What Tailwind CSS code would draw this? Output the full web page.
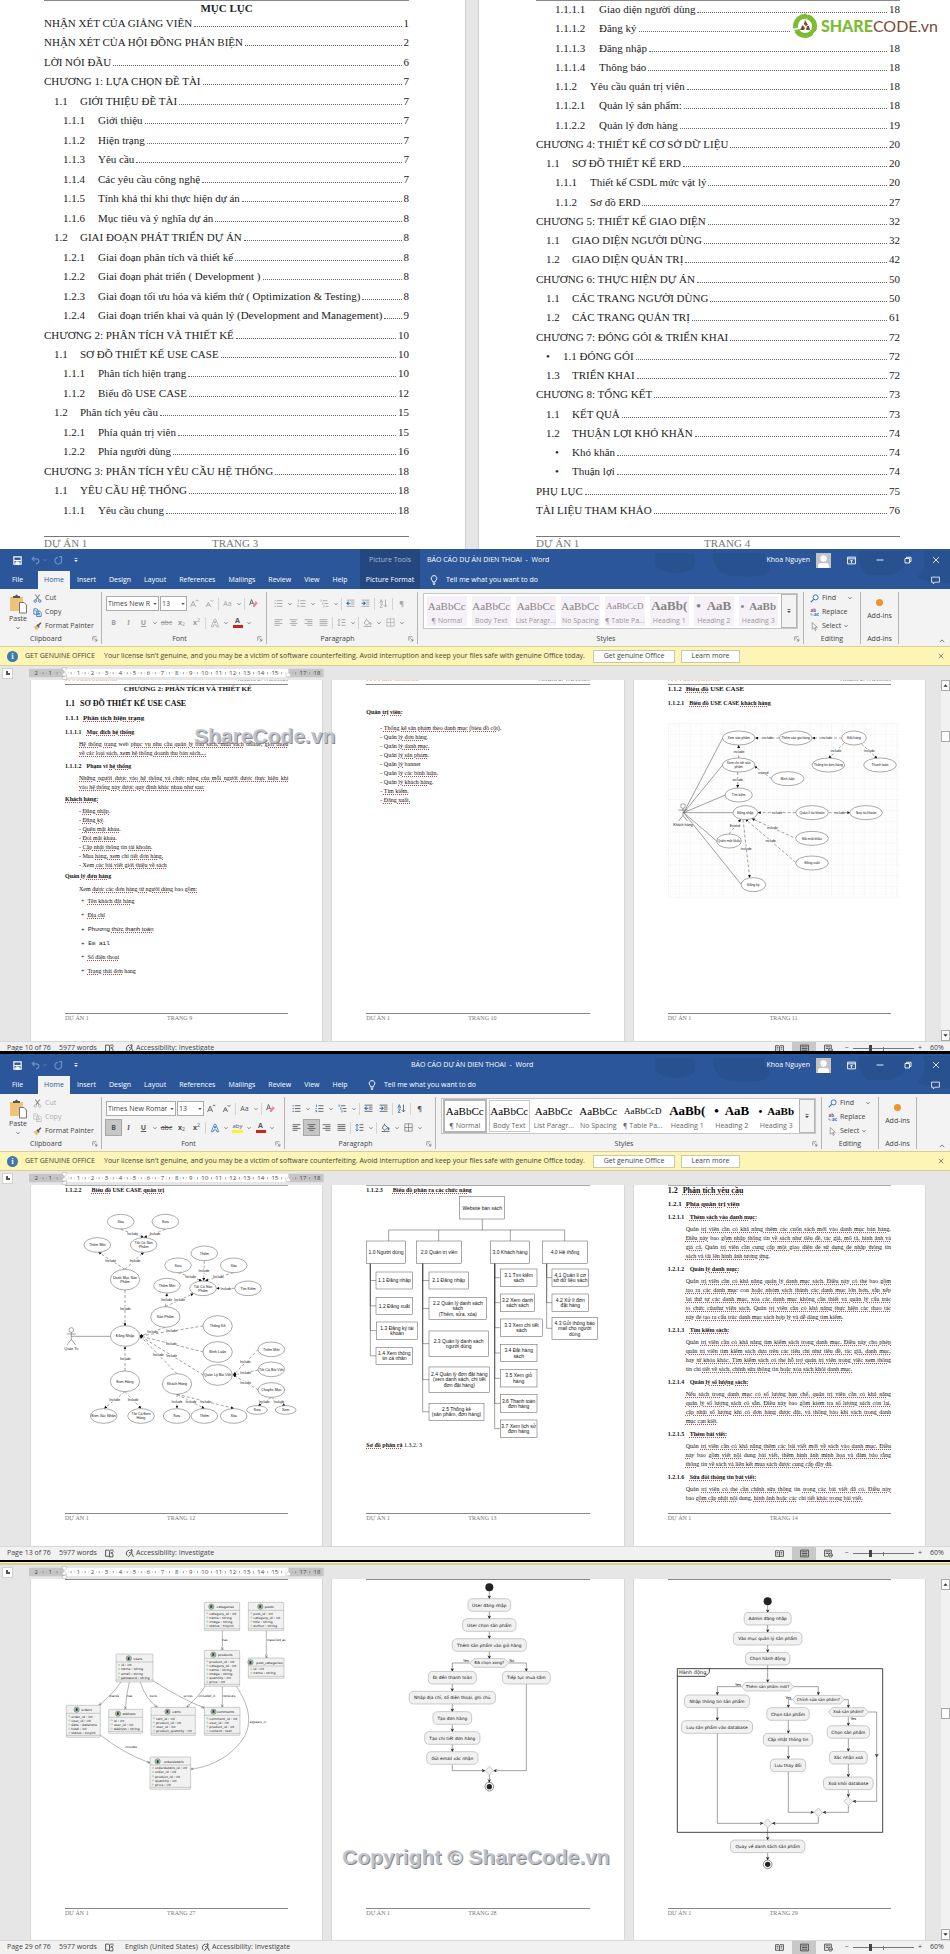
<!DOCTYPE html>
<html lang="vi">

  <head>
    <meta charset="UTF-8" />
    <meta name="viewport" content="width=device-width, initial-scale=1.0" />
    <script src="https://cdn.jsdelivr.net/npm/@tailwindcss/browser@4"></script>
    <title>BÁO CÁO DỰ ÁN DIEN THOAI - Word</title>
  </head>

  <body class="bg-[#e6e6e6] font-['Open_Sans','Noto_Sans',sans-serif] text-[7px] text-[#444]">

    <!-- shared icons and arrow heads -->
    <svg class="absolute w-0 h-0" aria-hidden="true">
      <defs>
        <marker id="head" viewBox="0 0 10 10" refX="9" refY="5" markerWidth="9" markerHeight="9" markerUnits="userSpaceOnUse" orient="auto"><path d="M0 0L10 5L0 10z" fill="#111" /></marker>
        <marker id="flow" viewBox="0 0 10 10" refX="9" refY="5" markerWidth="13" markerHeight="11" markerUnits="userSpaceOnUse" orient="auto"><path d="M0 0L10 5L0 10L3 5z" fill="#222" /></marker>
        <marker id="crow" viewBox="0 0 12 10" refX="11" refY="5" markerWidth="12" markerHeight="10" markerUnits="userSpaceOnUse" orient="auto"><path d="M4 5L11 1M4 5L11 9M4 5H11" stroke="#555" fill="none" /><circle cx="3" cy="5" r="2.500" fill="#fff" stroke="#555" /></marker>
        <pattern id="grid" width="32.600" height="32.600" x="576" y="250" patternUnits="userSpaceOnUse"><path d="M0 8H33M0 16H33M0 24H33M8 0V33M16 0V33M24 0V33" stroke="#f7f7f7" fill="none" /><path d="M0 .5H33M.5 0V33" stroke="#e6e6e6" stroke-width="1.500" fill="none" /></pattern>
      </defs>
      <!-- fill and stroke are inherited from the svg that uses the symbol -->
      <symbol id="i-save" viewBox="0 0 16 16"><path d="M1.500 1.500H14.500V14.500H1.500z" stroke-width="2" /><path d="M2 8H14" stroke-width="2" /><path d="M5 10.500H11V15H5z" fill="currentColor" /></symbol>
      <symbol id="i-undo" viewBox="0 0 16 16"><path d="M6 1L2 5L6 9M2 5H10Q14 5 14 9T9 14" stroke-width="2" /></symbol>
      <symbol id="i-redo" viewBox="0 0 16 16"><path d="M12.500 5A6 6 0 1 1 7 2.500M9 1H13.500V5.500" stroke-width="2" /></symbol>
      <symbol id="i-more" viewBox="0 0 16 16"><path d="M4 4H12" stroke-width="2" /><path d="M3 8H13L8 13z" fill="currentColor" stroke="none" /></symbol>
      <symbol id="i-bulb" viewBox="0 0 16 16"><path d="M6 11V9.500A4.500 4.500 0 1 1 10 9.500V11zM6 13H10M6.500 15H9.500" /></symbol>
      <symbol id="i-ribbon" viewBox="0 0 16 16"><path d="M1 2H15V14H1zM1 5H15M8 12.500V7.500M5.500 9.500L8 7L10.500 9.500" stroke-width="1.600" /></symbol>
      <symbol id="i-min" viewBox="0 0 16 16"><path d="M1 8H15" stroke-width="1.800" /></symbol>
      <symbol id="i-restore" viewBox="0 0 16 16"><path d="M2 5H11V14H2zM5 5V2.500H14V11H11" stroke-width="1.800" /></symbol>
      <symbol id="i-close" viewBox="0 0 16 16"><path d="M2 2L14 14M14 2L2 14" stroke-width="1.600" /></symbol>
      <symbol id="i-comment" viewBox="0 0 16 16"><path d="M1 2H15V11H7L4 14V11H1z" stroke-width="1.400" /></symbol>
      <symbol id="i-paste" viewBox="0 0 18 20"><path d="M1 3H14V17H1z" fill="#eec47a" stroke="none" /><path d="M4 4V2H6Q7.500-1 9 2H11V4z" fill="#555" stroke="none" /><path d="M10.500 8.500H15L17.500 11V19H10.500z" fill="#fff" stroke="#777" stroke-width="1" /></symbol>
      <symbol id="i-cut" viewBox="0 0 16 16"><path d="M4 1L11 10.500M12 1L5 10.500" stroke="#888" stroke-width="1.800" /><circle cx="4" cy="12.500" r="2.200" stroke="var(--accent)" /><circle cx="12" cy="12.500" r="2.200" stroke="var(--accent)" /></symbol>
      <symbol id="i-copy" viewBox="0 0 16 16"><path d="M1.500 1.500H7L9 4V11H1.500zM6.500 5.500H12L14.500 8V15H6.500z" fill="#fff" stroke="var(--accent)" /><path d="M8.500 9.500H12.500M8.500 12H12.500M3 5H6" stroke="var(--accent)" /></symbol>
      <symbol id="i-brush" viewBox="0 0 16 16"><path d="M1 8L7 6L10 10L6 15Q3 12 1 8z" fill="#eebc70" stroke="none" /><path d="M7 5L11 9.500M9 6.500L14 1.500" stroke="#555" stroke-width="2.500" /></symbol>
      <symbol id="i-launch" viewBox="0 0 16 16"><path d="M2 12V2H12M6 6L13 13M13 7V13.500H7" stroke-width="1.600" /></symbol>
      <symbol id="i-chev" viewBox="0 0 16 16"><path d="M2 5L8 11L14 5" stroke-width="3" /></symbol>
      <symbol id="i-up" viewBox="0 0 16 16"><path d="M2 11L8 5L14 11" stroke-width="1.800" /></symbol>
      <symbol id="i-tri" viewBox="0 0 16 16"><path d="M1 4H15L8 12z" fill="currentColor" stroke="none" /></symbol>
      <symbol id="i-grow" viewBox="0 0 16 16"><path d="M1 14L5.500 4L10 14M3 11H8M10 4L12.500 1.500L15 4" /></symbol>
      <symbol id="i-shrink" viewBox="0 0 16 16"><path d="M2 14L6 6L10 14M4 11H8M10 2L12.500 4.500L15 2" /></symbol>
      <symbol id="i-eraser" viewBox="0 0 16 16"><path d="M1 11L4.500 1L8 9M2.500 7.500H7" stroke="#666" stroke-width="1.700" /><path d="M7 11L12 4L15.500 7L10 14H7.500z" fill="#e88a9a" stroke="none" /></symbol>
      <symbol id="i-bullets" viewBox="0 0 16 16"><path d="M5 3H15M5 8H15M5 13H15" /><path d="M1 3H3M1 8H3M1 13H3" stroke="var(--accent)" stroke-width="2" /></symbol>
      <symbol id="i-numbers" viewBox="0 0 16 16"><path d="M6 3H15M6 8H15M6 13H15" /><path d="M2.500 1V5M1 8H3M1 13.500H4M1 11.500H3" stroke="var(--accent)" /></symbol>
      <symbol id="i-multi" viewBox="0 0 16 16"><path d="M5 3H13M8 8H15M10 13H15" /><path d="M2 1V5M5 6V10M7 11V15" stroke="var(--accent)" /></symbol>
      <symbol id="i-outdent" viewBox="0 0 16 16"><path d="M1 2H15M9 5.500H15M9 9H15M1 13H15" /><path d="M8 7.500H2M4.500 4.500L1.500 7.500L4.500 10.500" stroke="#2f6fb5" stroke-width="1.800" /></symbol>
      <symbol id="i-indent" viewBox="0 0 16 16"><path d="M1 2H15M9 5.500H15M9 9H15M1 13H15" /><path d="M1 7.500H7M4.500 4.500L7.500 7.500L4.500 10.500" stroke="#2f6fb5" stroke-width="1.800" /></symbol>
      <symbol id="i-sort" viewBox="0 0 16 16"><path d="M1.500 7L4 1L6.500 7M2.500 5H5.500M2 9H6L2 15H6" stroke="var(--accent)" /><path d="M11.500 1V14M8.500 11L11.500 14L14.500 11" /></symbol>
      <symbol id="i-left" viewBox="0 0 16 16"><path d="M1 3H15M1 6.300H10M1 9.600H15M1 13H10" /></symbol>
      <symbol id="i-center" viewBox="0 0 16 16"><path d="M1 3H15M4 6.300H12M1 9.600H15M4 13H12" /></symbol>
      <symbol id="i-right" viewBox="0 0 16 16"><path d="M1 3H15M6 6.300H15M1 9.600H15M6 13H15" /></symbol>
      <symbol id="i-justify" viewBox="0 0 16 16"><path d="M1 3H15M1 6.300H15M1 9.600H15M1 13H15" /></symbol>
      <symbol id="i-spacing" viewBox="0 0 16 16"><path d="M8 3H15M8 8H15M8 13H15" /><path d="M3.500 2V14M1 4.500L3.500 2L6 4.500M1 11.500L3.500 14L6 11.500" stroke="var(--accent)" /></symbol>
      <symbol id="i-shade" viewBox="0 0 16 16"><path d="M6 3L12 8L7 13L2 9zM6 3V1" /><path d="M13 8Q16 12 13.500 12T13 8" fill="var(--accent)" stroke="var(--accent)" /><path d="M1 15H15" /></symbol>
      <symbol id="i-border" viewBox="0 0 16 16"><path d="M1.500 1.500H14.500V14.500H1.500zM8 1V15M1 8H15" stroke-width="1" /></symbol>
      <symbol id="i-find" viewBox="0 0 16 16"><circle cx="10" cy="6" r="4.500" stroke="#2f6fb5" stroke-width="1.600" /><path d="M6.500 9.500L1.500 14.500" stroke="#2f6fb5" stroke-width="2" /></symbol>
      <symbol id="i-select" viewBox="0 0 16 16"><path d="M4 1V13L7 10L9.500 15L11 14L9 9.500H13z" fill="#fff" stroke="#777" stroke-width="1.200" /></symbol>
      <symbol id="i-book" viewBox="0 0 16 16"><path d="M1 3H7L8 4L9 3H15V13H9L8 14L7 13H1zM8 4V14M3 6H6M3 9H6M10 6H13M10 9H13" /></symbol>
      <symbol id="i-proof" viewBox="0 0 16 16"><path d="M8 3V14M8 3L7 2H1V13H7L8 14H14V9M9 2H15M10 9L15 4M10 5L14 9" /></symbol>
      <symbol id="i-print" viewBox="0 0 16 16"><path d="M1 2H15V14H1zM3 5H13M3 8H13M3 11H13" /></symbol>
      <symbol id="i-web" viewBox="0 0 16 16"><path d="M13 7V2H1V13H7M3 5H11M3 8H8" /><circle cx="11.500" cy="11" r="3.500" /><path d="M8 11H15" /></symbol>
      <symbol id="i-access" viewBox="0 0 16 16"><path d="M8 2A6 6 0 0 0 4 12M7 6L12 8M12 3V8L15 14M10 9L6 14" stroke-width="1.600" /><circle cx="11.500" cy="2.500" r="1.300" /></symbol>
    </svg>

    <!-- table of contents -->
    <section class="relative grid grid-cols-[466fr_472fr] gap-3 h-[549px] overflow-hidden font-['Liberation_Serif',serif] text-[11px] leading-4 text-[#222]">
      <article class="bg-white border-r border-[#cfcfcf] pl-11 pr-[56px] flex flex-col">
        <h2 class="h-[15px] leading-[15px] text-center font-bold border-t border-[#888]">MỤC LỤC</h2>
        <ol id="toc-left" class="h-[503px] flex flex-col justify-between"></ol>
        <footer class="mt-[18px] grid grid-cols-[168px_1fr] border-t border-[#777] text-[#777] leading-3"><span>DỰ ÁN 1</span><span>TRANG 3</span></footer>
      </article>
      <article class="bg-white border-l border-[#cfcfcf] pl-[57px] pr-[50px] flex flex-col">
        <ol id="toc-right" class="h-[518px] flex flex-col justify-between border-t border-[#888]"></ol>
        <footer class="mt-[18px] grid grid-cols-[168px_1fr] border-t border-[#777] text-[#777] leading-3"><span>DỰ ÁN 1</span><span>TRANG 4</span></footer>
      </article>
      <!-- site logo over the page -->
      <div class="absolute right-2 top-3 flex items-center gap-[3px] pl-[2px] pr-1 h-[27px] font-[Lato,sans-serif] text-[16px]">
        <svg class="w-[26px] h-[26px]" viewBox="0 0 26 26" aria-hidden="true">
          <circle cx="13" cy="13" r="9.500" fill="none" stroke="#7dbb32" stroke-width="5" stroke-dasharray="17 2.900" transform="rotate(-75 13 13)" />
          <path d="M13 0L17 3L13 7zM2 17L6 22L8 16zM25 16L20 22L18 17z" fill="#7dbb32" />
          <path d="M13 7L16 12L13.500 13L12 11zM8 17L10.500 12L13 15L12 17zM18 17H14L15 13L17 13z" fill="#7a4a33" />
        </svg>
        <span><b class="font-black text-[#7dbb32]">SHARE</b><span class="text-[#7a4a33]">CODE.vn</span></span>
      </div>
    </section>

    <!-- first Word window -->
    <section class="relative">
      <div data-header="picture"></div>
      <div data-ruler class="h-[14px]"></div>
      <div class="flex">
        <main class="flex-1 grid grid-cols-3 gap-2 h-[361px] pl-[30px] pr-[15px] font-['Liberation_Serif',serif] text-[6px] leading-[9px] text-[#111] [&_u]:decoration-dotted [&_u]:decoration-1 [&_u]:decoration-[#d04040] [&_u]:underline-offset-1">
          <article class="bg-white border-x border-[#d8d8d8] px-[34px] flex flex-col">
            <div class="h-[5px] flex shrink-0 justify-between items-end overflow-hidden border-b border-[#888]"><span class="text-[#e9a06a]">FPT POLYTECHNIC</span><span class="text-[#777]">NHÓM 2: WD18305</span></div>
            <h2 class="pl-[22px] text-[7px] font-bold text-center">CHƯƠNG 2: PHÂN TÍCH VÀ THIẾT KẾ</h2>
            <h3 class="mt-[5px] text-[8px] font-bold flex gap-[5px]"><span>1.1</span>SƠ ĐỒ THIẾT KẾ USE CASE</h3>
            <h4 class="mt-[6px] text-[7px] font-bold flex gap-1"><span>1.1.1</span><u>Phân tích hiện trạng</u></h4>
            <h5 class="mt-[5px] font-bold flex gap-[5px]"><span>1.1.1.1</span><u>Mục đích hệ thống</u></h5>
            <p class="mt-[3px] pl-[14px]"><span class="block [text-align-last:justify]"><u>Hệ thống trang</u> web <u>phục vụ nhu cầu quản lý bán sách, mua sách</u> online, <u>giới thiệu</u></span><u>về các loại sách, xem hệ thống doanh thu bán sách,...</u></p>
            <h5 class="mt-1 font-bold flex gap-[5px]"><span>1.1.1.2</span><span>Phạm vi <u>hệ thống</u></span></h5>
            <p class="mt-[3px] pl-[14px]"><span class="block [text-align-last:justify]"><u>Những người được vào hệ thống và chức năng của mỗi người được thực hiện khi</u></span><u>vào hệ thống này được quy định khác nhau như sau:</u></p>
            <h5 class="mt-[3px] font-bold"><u>Khách hàng:</u></h5>
            <ul class="mt-[3px] pl-[14px]">
              <li>- <u>Đăng nhập.</u></li>
              <li>- <u>Đăng ký.</u></li>
              <li>- <u>Quên mật khẩu.</u></li>
              <li>- <u>Đổi mật khẩu.</u></li>
              <li>- <u>Cập nhật thông</u> tin <u>tài khoản.</u></li>
              <li>- Mua <u>hàng, xem</u> chi <u>tiết đơn hàng.</u></li>
              <li>- Xem <u>các bài viết giới thiệu về sách</u></li>
            </ul>
            <h5 class="mt-[2px] font-bold">Quản <u>lý đơn hàng</u></h5>
            <p class="mt-1 pl-[14px]">Xem <u>được các đơn hàng từ người dùng</u> bao <u>gồm:</u></p>
            <ul class="mt-[3px] pl-4 flex flex-col gap-[5px]">
              <li>+ &nbsp;<u>Tên khách đặt hàng</u></li>
              <li>+ &nbsp;<u>Địa chỉ</u></li>
              <li class="font-['Liberation_Sans',sans-serif]">+ &nbsp;Phương <u>thức thanh toán</u></li>
              <li class="font-['Liberation_Mono',monospace]">+ Em ail</li>
              <li>+ &nbsp;<u>Số điện thoại</u></li>
              <li>+ &nbsp;<u>Trạng thái đơn</u> hang</li>
            </ul>
            <footer class="mt-auto mb-[18px] grid grid-cols-[102px_1fr] border-t border-[#888] text-[#777]"><span>DỰ ÁN 1</span><span>TRANG 9</span></footer>
          </article>
          <article class="bg-white border-x border-[#d8d8d8] px-[34px] flex flex-col">
            <div class="h-[5px] flex shrink-0 justify-between items-end overflow-hidden border-b border-[#888]"><span class="text-[#e9a06a]">FPT POLYTECHNIC</span><span class="text-[#777]">NHÓM 2: WD18305</span></div>
            <h5 class="mt-[23px] font-bold">Quản <u>trị viên:</u></h5>
            <ul class="mt-[7px] pl-[14px]">
              <li>- <u>Thống kê sản phẩm theo danh mục (biểu đồ cột).</u></li>
              <li>- Quản <u>lý đơn hàng.</u></li>
              <li>- Quản <u>lý danh mục.</u></li>
              <li>- Quản <u>lý sản phẩm.</u></li>
              <li>- Quản <u>lý</u> banner</li>
              <li>- Quản <u>lý các bình luận.</u></li>
              <li>- Quản <u>lý khách hàng.</u></li>
              <li>- <u>Tìm kiếm.</u></li>
              <li>- <u>Đăng xuất.</u></li>
            </ul>
            <footer class="mt-auto mb-[18px] grid grid-cols-[102px_1fr] border-t border-[#888] text-[#777]"><span>DỰ ÁN 1</span><span>TRANG 10</span></footer>
          </article>
          <article class="bg-white border-x border-[#d8d8d8] px-[34px] flex flex-col">
            <div class="h-[5px] flex shrink-0 justify-between items-end overflow-hidden border-b border-[#888]"><span class="text-[#e9a06a]">FPT POLYTECHNIC</span><span class="text-[#777]">NHÓM 2: WD18305</span></div>
            <h4 class="text-[7px] font-bold flex gap-1"><span>1.1.2</span><span><u>Biểu đồ</u> USE CASE</span></h4>
            <h5 class="mt-[5px] font-bold flex gap-[5px]"><span>1.1.2.1</span><span><u>Biểu đồ</u> USE CASE <u>khách hàng</u></span></h5>
            <svg id="usecase-customer" class="mt-[15px] w-full overflow-visible font-['Liberation_Sans',sans-serif]" viewBox="576 250 670 525" role="img" aria-label="Use case khách hàng"></svg>
            <footer class="mt-auto mb-[18px] grid grid-cols-[102px_1fr] border-t border-[#888] text-[#777]"><span>DỰ ÁN 1</span><span>TRANG 11</span></footer>
          </article>
        </main>
        <div class="w-[9px] h-[361px] bg-[#f1f1f1] flex flex-col items-stretch text-[#333]">
          <button class="h-[11px] border border-[#aaa] bg-white flex items-center justify-center" aria-label="Scroll up"><svg class="w-[5px] h-[5px] rotate-180"><use href="#i-tri" /></svg></button>
          <div class="mt-10 h-[11px] border border-[#aaa] bg-white"></div>
          <button class="mt-auto h-[11px] border border-[#aaa] bg-white flex items-center justify-center" aria-label="Scroll down"><svg class="w-[5px] h-[5px]"><use href="#i-tri" /></svg></button>
        </div>
      </div>
      <div class="h-[10px] overflow-hidden"><div data-status="Page 10 of 76"></div></div>
      <p class="absolute left-[194px] top-[175px] font-['Liberation_Sans',sans-serif] text-[21px] leading-6 font-bold text-[#c4c8d0]/90 [text-shadow:1px_1px_0_#888]">ShareCode.vn</p>
    </section>

    <div class="h-[3px] bg-black"></div>

    <!-- second Word window -->
    <section>
      <div data-header="text"></div>
      <div data-ruler class="h-[14px]"></div>
      <main class="grid grid-cols-3 gap-2 h-[361px] pl-[30px] pr-6 font-['Liberation_Serif',serif] text-[6px] leading-[9px] text-[#111] [&_u]:decoration-dotted [&_u]:decoration-1 [&_u]:decoration-[#d04040] [&_u]:underline-offset-1">
        <article class="bg-white border-x border-[#d8d8d8] px-[34px] flex flex-col">
          <h5 class="border-t border-[#aaa] font-bold flex gap-[10px]"><span>1.1.2.2</span><span><u>Biểu đồ</u> USE CASE <u>quản trị</u></span></h5>
          <svg id="usecase-admin" class="mt-[15px] w-full overflow-visible font-['Liberation_Sans',sans-serif]" viewBox="195 480 670 650" role="img" aria-label="Use case quản trị"></svg>
          <footer class="mt-auto mb-[23px] grid grid-cols-[102px_1fr] border-t border-[#888] text-[#777]"><span>DỰ ÁN 1</span><span>TRANG 12</span></footer>
        </article>
        <article class="bg-white border-x border-[#d8d8d8] px-[34px] flex flex-col">
          <h5 class="border-t border-[#aaa] font-bold flex gap-[10px]"><span>1.1.2.3</span><u>Biểu đồ phân ra các chức năng</u></h5>
          <svg id="functions" class="w-full overflow-visible font-['Liberation_Sans',sans-serif]" viewBox="1098 436 670 730" role="img" aria-label="Biểu đồ phân rã chức năng"></svg>
          <p class="mt-[3px]"><u class="font-bold">Sơ đồ phân rã</u> 1.3.2. 3</p>
          <footer class="mt-auto mb-[23px] grid grid-cols-[102px_1fr] border-t border-[#888] text-[#777]"><span>DỰ ÁN 1</span><span>TRANG 13</span></footer>
        </article>
        <article class="bg-white border-x border-[#d8d8d8] px-[34px] flex flex-col">
          <h3 class="border-t border-[#aaa] text-[8px] font-bold flex gap-[5px]"><span>1.2</span><u>Phân tích yêu cầu</u></h3>
          <h4 class="mt-[5px] text-[7px] font-bold flex gap-1"><span>1.2.1</span><u>Phía quản trị viên</u></h4>
          <div id="requirements"></div>
          <footer class="mt-auto mb-[23px] grid grid-cols-[102px_1fr] border-t border-[#888] text-[#777]"><span>DỰ ÁN 1</span><span>TRANG 14</span></footer>
        </article>
      </main>
      <div data-status="Page 13 of 76"></div>
    </section>

    <div class="h-[2px] bg-black"></div>

    <!-- third Word window, ribbon scrolled away -->
    <section class="relative">
      <div class="h-[3px] bg-[#faf3b4] border-b-2 border-[#d8cf98]"></div>
      <div data-ruler class="h-[14px]"></div>
      <div class="flex">
        <main class="flex-1 grid grid-cols-3 gap-2 h-[361px] pl-[30px] pr-[15px] font-['Liberation_Serif',serif] text-[6px] leading-[9px]">
          <article class="bg-white border-x border-[#d8d8d8] px-[34px] flex flex-col">
            <svg id="erd" class="border-t border-[#888] pt-5 w-full overflow-visible font-['DejaVu_Sans',sans-serif]" viewBox="195 135 670 575" role="img" aria-label="Sơ đồ ERD"></svg>
            <footer class="mt-auto mb-[22px] grid grid-cols-[102px_1fr] border-t border-[#888] text-[#777]"><span>DỰ ÁN 1</span><span>TRANG 27</span></footer>
          </article>
          <article class="bg-white border-x border-[#d8d8d8] px-[34px] flex flex-col">
            <svg id="flow-user" class="border-t border-[#888] pt-[2px] w-full overflow-visible font-['DejaVu_Sans',sans-serif]" viewBox="1098 81 670 640" role="img" aria-label="Luồng mua hàng"></svg>
            <footer class="mt-auto mb-[22px] grid grid-cols-[102px_1fr] border-t border-[#888] text-[#777]"><span>DỰ ÁN 1</span><span>TRANG 28</span></footer>
          </article>
          <article class="bg-white border-x border-[#d8d8d8] px-[34px] flex flex-col">
            <svg id="flow-admin" class="border-t border-[#888] pt-[15px] w-full overflow-visible font-['DejaVu_Sans',sans-serif]" viewBox="576 120 670 830" role="img" aria-label="Luồng quản lý sản phẩm"></svg>
            <footer class="mt-auto mb-[22px] grid grid-cols-[102px_1fr] border-t border-[#888] text-[#777]"><span>DỰ ÁN 1</span><span>TRANG 29</span></footer>
          </article>
        </main>
        <div class="w-[9px] h-[361px] bg-[#f1f1f1] flex flex-col items-stretch text-[#333]">
          <button class="h-[11px] border border-[#aaa] bg-white flex items-center justify-center" aria-label="Scroll up"><svg class="w-[5px] h-[5px] rotate-180"><use href="#i-tri" /></svg></button>
          <div class="mt-[118px] h-[11px] border border-[#aaa] bg-white"></div>
          <button class="mt-auto h-[11px] border border-[#aaa] bg-white flex items-center justify-center" aria-label="Scroll down"><svg class="w-[5px] h-[5px]"><use href="#i-tri" /></svg></button>
        </div>
      </div>
      <div data-status="Page 29 of 76" data-lang="English (United States)"></div>
      <p class="absolute left-[342px] top-[283px] font-['Liberation_Sans',sans-serif] text-[21px] leading-6 font-bold text-[#c4c8d0]/90 [text-shadow:1px_1px_0_#888]">Copyright © ShareCode.vn</p>
    </section>

    <script>
      const $ = (id) => document.getElementById(id);

      // ---- table of contents: [level, number, title, page] ----
      const tocLeft = [
        [0, '', 'NHẬN XÉT CỦA GIẢNG VIÊN', 1], [0, '', 'NHẬN XÉT CỦA HỘI ĐỒNG PHẢN BIỆN', 2], [0, '', 'LỜI NÓI ĐẦU', 6],
        [0, '', 'CHƯƠNG 1: LỰA CHỌN ĐỀ TÀI', 7], [1, '1.1', 'GIỚI THIỆU ĐỀ TÀI', 7], [2, '1.1.1', 'Giới thiệu', 7],
        [2, '1.1.2', 'Hiện trạng', 7], [2, '1.1.3', 'Yêu cầu', 7], [2, '1.1.4', 'Các yêu cầu công nghệ', 7],
        [2, '1.1.5', 'Tính khả thi khi thực hiện dự án', 8], [2, '1.1.6', 'Mục tiêu và ý nghĩa dự án', 8],
        [1, '1.2', 'GIAI ĐOẠN PHÁT TRIỂN DỰ ÁN', 8], [2, '1.2.1', 'Giai đoạn phân tích và thiết kế', 8],
        [2, '1.2.2', 'Giai đoạn phát triển ( Development )', 8], [2, '1.2.3', 'Giai đoạn tối ưu hóa và kiểm thử ( Optimization &amp; Testing)', 8],
        [2, '1.2.4', 'Giai đoạn triển khai và quản lý (Development and Management)', 9], [0, '', 'CHƯƠNG 2: PHÂN TÍCH VÀ THIẾT KẾ', 10],
        [1, '1.1', 'SƠ ĐỒ THIẾT KẾ USE CASE', 10], [2, '1.1.1', 'Phân tích hiện trạng', 10], [2, '1.1.2', 'Biểu đồ USE CASE', 12],
        [1, '1.2', 'Phân tích yêu cầu', 15], [2, '1.2.1', 'Phía quản trị viên', 15], [2, '1.2.2', 'Phía người dùng', 16],
        [0, '', 'CHƯƠNG 3: PHÂN TÍCH YÊU CẦU HỆ THỐNG', 18], [1, '1.1', 'YÊU CẦU HỆ THỐNG', 18], [2, '1.1.1', 'Yêu cầu chung', 18],
      ];
      const tocRight = [
        [3, '1.1.1.1', 'Giao diện người dùng', 18], [3, '1.1.1.2', 'Đăng ký', ''], [3, '1.1.1.3', 'Đăng nhập', 18], [3, '1.1.1.4', 'Thông báo', 18],
        [2, '1.1.2', 'Yêu cầu quản trị viên', 18], [3, '1.1.2.1', 'Quản lý sản phẩm:', 18], [3, '1.1.2.2', 'Quản lý đơn hàng', 19],
        [0, '', 'CHƯƠNG 4: THIẾT KẾ CƠ SỞ DỮ LIỆU', 20], [1, '1.1', 'SƠ ĐỒ THIẾT KẾ ERD', 20], [2, '1.1.1', 'Thiết kế CSDL mức vật lý', 20],
        [2, '1.1.2', 'Sơ đồ ERD', 27], [0, '', 'CHƯƠNG 5: THIẾT KẾ GIAO DIỆN', 32], [1, '1.1', 'GIAO DIỆN NGƯỜI DÙNG', 32],
        [1, '1.2', 'GIAO DIỆN QUẢN TRỊ', 42], [0, '', 'CHƯƠNG 6: THỰC HIỆN DỰ ÁN', 50], [1, '1.1', 'CÁC TRANG NGƯỜI DÙNG', 50],
        [1, '1.2', 'CÁC TRANG QUẢN TRỊ', 61], [0, '', 'CHƯƠNG 7: ĐÓNG GÓI &amp; TRIỂN KHAI', 72], [4, '•', '1.1 ĐÓNG GÓI', 72],
        [1, '1.3', 'TRIỂN KHAI', 72], [0, '', 'CHƯƠNG 8: TỔNG KẾT', 73], [1, '1.1', 'KẾT QUẢ', 73], [1, '1.2', 'THUẬN LỢI KHÓ KHĂN', 74],
        [5, '•', 'Khó khăn', 74], [5, '•', 'Thuận lợi', 74], [0, '', 'PHỤ LỤC', 75], [0, '', 'TÀI LIỆU THAM KHẢO', 76],
      ];
      const numClass = ['hidden', 'ml-[10px] w-[26px]', 'ml-[19px] w-[35px]', 'ml-[19px] w-[44px]', 'ml-[10px] w-[17px]', 'ml-[19px] w-[17px]'];
      // the row without a page number stops short of the logo
      const tocRow = ([level, num, text, page]) => `<li class="flex items-baseline whitespace-nowrap">
        <span class="shrink-0 ${numClass[level]}">${num}</span><span>${text}</span>
        <span class="flex-1 ml-[2px] ${page ? 'mr-[2px]' : 'mr-[110px]'} border-b border-dotted border-[#666]"></span><span>${page}</span></li>`;
      $('toc-left').innerHTML = tocLeft.map(tocRow).join('');
      $('toc-right').innerHTML = tocRight.map(tocRow).join('');

      // ---- Word ribbon ----
      const icon = (name, cls = 'w-[9px] h-[9px]') => `<svg class="fill-none stroke-current ${cls}" stroke-width="1.5"><use href="#i-${name}"/></svg>`;
      const btn = (label, body, on = false) => `<button aria-label="${label}" class="w-[15px] h-[15px] flex items-center justify-center ${on ? 'bg-[#c6c6c6] outline outline-[#a8a8a8]' : ''}">${body}</button>`;
      const chev = `<button aria-label="More options" class="w-2 h-[15px] flex items-center justify-center text-[#555]">${icon('chev', 'w-1 h-1')}</button>`;
      const sep = '<i class="w-px h-3 mx-px bg-[#d4d4d4]"></i>';
      const group = (label, body, cls, launch = true) => `<div class="mt-[3px] mb-[2px] flex flex-col border-r border-[#b5b5b5] ${cls}">
        <div class="flex-1">${body}</div>
        <div class="h-[10px] flex items-center"><span class="flex-1 text-center">${label}</span>${launch ? `<button aria-label="${label} settings" class="w-[9px]">${icon('launch', 'w-[6px] h-[6px] text-[#666]')}</button>` : ''}</div></div>`;
      const tabs = ['Insert', 'Design', 'Layout', 'References', 'Mailings', 'Review', 'View', 'Help'];
      const styles = [
        ['AaBbCc', '¶ Normal', 'text-[11px]'], ['AaBbCc', 'Body Text', 'text-[11px]'], ['AaBbCc', 'List Paragr...', 'text-[11px]'],
        ['AaBbCc', 'No Spacing', 'text-[11px]'], ['AaBbCcD', '¶ Table Pa...', 'text-[9px]'], ['AaBb(', 'Heading 1', 'text-[13px] font-bold'],
        ['•&nbsp; AaB', 'Heading 2', 'text-[13px] font-bold'], ['•&nbsp; AaBb', 'Heading 3', 'text-[11px] font-bold'],
      ];

      function header(kind) {
        const pic = kind === 'picture';
        const tone = pic ? 'text-[#a0a0a0] [--accent:#a8a8a8]' : 'text-[#555] [--accent:#2f6fb5]';
        return `
        <div class="relative h-10 bg-[#2b579a] text-white flex flex-col">
          <svg class="absolute right-0 top-0 w-[295px] h-10" viewBox="0 0 295 40" fill="#264c8a" aria-hidden="true"><path d="M0 4H38Q44 18 34 22Q10 28 0 16zM58 4H110V12Q120 18 110 26Q84 30 66 24Q56 12 58 4zM205 2H258Q250 22 236 26H212Q200 14 205 2zM268 2H295V34Q270 34 262 28Q274 18 268 2z" opacity=".6"/></svg>
          ${pic ? '<div class="absolute left-[360px] top-0 w-[60px] h-10 bg-[#24477f]"></div>' : ''}
          <div class="relative h-[22px] flex items-center">
            <div class="${pic ? 'w-[360px]' : 'w-[411px]'} flex items-center">
              <button aria-label="Save" class="ml-[13px]">${icon('save')}</button>
              <button aria-label="Undo" class="ml-[9px] text-[#6f90c4]">${icon('undo')}</button>
              <button aria-label="Undo list" class="ml-[3px] text-[#6f90c4]">${icon('chev', 'w-1 h-1')}</button>
              <button aria-label="Redo" class="ml-[7px] text-[#6f90c4]">${icon('redo')}</button>
              <button aria-label="Customize" class="ml-[10px]">${icon('more', 'w-[6px] h-[6px]')}</button>
            </div>
            ${pic ? '<span class="w-[60px] mr-[7px] text-center text-[#a9b9d6]">Picture Tools</span>' : ''}
            <h1>BÁO CÁO DỰ ÁN DIEN THOAI &nbsp;-&nbsp; Word</h1>
            <span class="ml-auto">Khoa Nguyen</span>
            <svg class="ml-[6px] w-[15px] h-[15px]" viewBox="0 0 15 15" aria-hidden="true"><path d="M0 0H15V15H0z" fill="#c3c3c3"/><circle cx="7.500" cy="5.500" r="3.200" fill="#fff"/><path d="M2 15V13Q2 10 5 10H10Q13 10 13 13V15z" fill="#fff"/></svg>
            <button aria-label="Ribbon display" class="ml-4">${icon('ribbon')}</button>
            <button aria-label="Minimize" class="ml-5">${icon('min', 'w-2 h-2')}</button>
            <button aria-label="Restore" class="ml-5">${icon('restore', 'w-2 h-2')}</button>
            <button aria-label="Close" class="ml-5 mr-[10px]">${icon('close', 'w-2 h-2')}</button>
          </div>
          <nav class="relative h-[18px] flex items-center whitespace-nowrap">
            <a href="#" class="ml-3 w-[26px]">File</a>
            <a href="#" class="h-full w-8 mr-[7px] flex items-center justify-center bg-[#f3f3f3] text-[#2b579a]">Home</a>
            <span class="flex gap-[13px]">${tabs.map((t) => `<a href="#">${t}</a>`).join('')}</span>
            ${pic ? '<a href="#" class="absolute left-[360px] w-[60px] text-center">Picture Format</a>' : ''}
            <a href="#" class="absolute ${pic ? 'left-[429px]' : 'left-[367px]'} flex items-center gap-[7px]">${icon('bulb', 'w-[10px] h-[10px]')}Tell me what you want to do</a>
            <button aria-label="Comments" class="ml-auto mr-[10px]">${icon('comment')}</button>
          </nav>
        </div>
        <div class="h-[57px] bg-[#f3f3f3] flex whitespace-nowrap leading-[10px]">
          ${group('Clipboard', `<div class="flex">
            <button class="w-[26px] ml-[5px] mt-[2px] flex flex-col items-center">${icon('paste', 'w-[18px] h-5')}<span>Paste</span>${icon('chev', 'w-1 h-1 mt-[2px]')}</button>
            <div class="ml-[2px] -mt-px ${pic ? '[--accent:#2f6fb5]' : '[--accent:#b8b8b8]'}">
              <button class="h-[14px] flex items-center gap-[3px] ${pic ? '' : 'text-[#b0b0b0]'}">${icon('cut')}Cut</button>
              <button class="h-[14px] flex items-center gap-[3px] ${pic ? '' : 'text-[#b0b0b0]'}">${icon('copy')}Copy</button>
              <button class="h-[14px] flex items-center gap-[3px]">${icon('brush')}Format Painter</button>
            </div></div>`, 'w-[102px]')}
          ${group('Font', `<div class="pt-1 pl-1 flex flex-col gap-1 ${tone}">
            <div class="flex items-center">
              <span class="relative ${pic ? 'w-[53px]' : 'w-[70px]'} h-[15px]"><select aria-label="Font name" class="w-full h-full appearance-none border border-[#ababab] bg-white pl-[1px] pr-2 text-[#444]"><option>${pic ? 'Times New R' : 'Times New Roman'}</option></select>${icon('tri', 'absolute right-[2px] top-[6px] w-1 h-1 text-[#555]')}</span>
              <span class="relative w-[27px] h-[15px] ml-px"><select aria-label="Font size" class="w-full h-full appearance-none border border-[#ababab] bg-white pl-[1px] text-[#444]"><option>13</option></select>${icon('tri', 'absolute right-[2px] top-[6px] w-1 h-1 text-[#555]')}</span>
              ${btn('Grow font', icon('grow'))}${btn('Shrink font', icon('shrink'))}${sep}${btn('Change case', 'Aa')}${chev}${sep}${btn('Clear formatting', icon('eraser'))}
            </div>
            <div class="flex items-center">
              ${btn('Bold', '<b>B</b>', !pic)}${btn('Italic', '<em class="font-serif font-bold">I</em>')}${btn('Underline', '<span class="underline font-bold">U</span>')}${chev}
              ${btn('Strikethrough', '<s>abc</s>')}${btn('Subscript', '<b>x</b><sub>2</sub>')}${btn('Superscript', '<b>x</b><sup>2</sup>')}${sep}
              ${btn('Text effects', '<svg class="w-[10px] h-[10px]" viewBox="0 0 16 16"><path d="M2 14L7 2H9L14 14H11L10 11H6L5 14zM7 8H9L8 5z" fill="#fff" stroke="var(--accent)" stroke-width="1.300"/></svg>')}${chev}
              ${pic ? '' : btn('Highlight', '<span class="border-b-[3px] border-[#ffee33] leading-[7px] text-[6px]">aby</span>') + chev}
              ${btn('Font colour', '<span class="w-[10px] border-b-[3px] border-[#c22] leading-2 font-bold text-[#555] text-center">A</span>')}${chev}
            </div></div>`, pic ? 'w-[165px]' : 'w-[183px]')}
          ${group('Paragraph', `<div class="pt-1 pl-1 flex flex-col gap-1 ${tone}">
            <div class="flex items-center">
              ${btn('Bullets', icon('bullets'))}${chev}${btn('Numbering', icon('numbers'))}${chev}${btn('Multilevel list', icon('multi'))}${chev}${sep}
              ${btn('Decrease indent', icon('outdent'))}${btn('Increase indent', icon('indent'))}${sep}${btn('Sort', icon('sort'))}${sep}${btn('Show marks', '<b>¶</b>')}
            </div>
            <div class="flex items-center">
              ${btn('Align left', icon('left'))}${btn('Center', icon('center'), !pic)}${btn('Align right', icon('right'))}${btn('Justify', icon('justify'))}${sep}
              ${btn('Line spacing', icon('spacing'))}${chev}${sep}${btn('Shading', icon('shade'))}${chev}${btn('Borders', icon('border'))}${chev}
            </div></div>`, 'w-[151px]')}
          ${group('Styles', `<div class="mt-px mx-[5px] h-9 flex border border-[#c6c6c6] bg-white">
            <div class="flex-1 grid grid-cols-8 gap-[5px] px-[3px] py-[2px]">
              ${styles.map(([s, name, cls], i) => `<button class="min-w-0 flex flex-col items-center justify-between ${pic ? 'bg-[#f6f1f8] text-[#858585]' : 'text-black'} ${!pic && i === 0 ? 'outline-2 outline-[#b5b5b5]' : ''} ${!pic && i === 1 ? 'outline outline-[#c9c9c9]' : ''}"><span class="h-4 leading-5 font-['Liberation_Serif',serif] ${cls}">${s}</span><span class="${pic ? 'text-[#999]' : 'text-[#666]'}">${name}</span></button>`).join('')}
            </div>
            <button aria-label="More styles" class="w-4 bg-[#f3f3f3] border border-[#b5b5b5] flex items-center justify-center">${icon('more', 'w-[6px] h-[6px]')}</button></div>`, 'w-[386px]')}
          ${group('Editing', `<div class="pl-[6px] -mt-px">
              <button class="h-[14px] w-[42px] flex items-center gap-[3px]">${icon('find')}Find<span class="ml-auto">${icon('chev', 'w-1 h-1')}</span></button>
              <button class="h-[14px] flex items-center gap-[3px]"><svg class="w-[9px] h-[9px]" viewBox="0 0 18 18" font-size="9" font-weight="700"><text x="1" y="8" fill="#7a4a9a">ab</text><text x="8" y="16" fill="#2f6fb5">ac</text><path d="M2 10V14H7" fill="none" stroke="#2f6fb5"/></svg>Replace</button>
              <button class="h-[14px] flex items-center gap-[3px]">${icon('select')}Select ${icon('chev', 'w-1 h-1')}</button></div>`, 'w-[57px]', false)}
          ${group('Add-ins', '<button class="w-full flex flex-col items-center gap-[5px] pt-[7px]"><span class="w-[7px] h-[7px] rounded-full bg-[#f0932b]"></span>Add-ins</button>', 'w-[38px]', false)}
          <button aria-label="Collapse ribbon" class="ml-auto mr-[5px] mt-auto mb-[2px]">${icon('up', 'w-[6px] h-[6px]')}</button>
        </div>
        <div class="h-5 bg-[#fcf5b6] border-y border-[#d9cf93] flex items-center whitespace-nowrap">
          <span class="ml-[7px] w-[11px] h-[11px] rounded-full bg-[#3f78ad] text-white text-[8px] leading-[11px] text-center font-bold font-serif">i</span>
          <span class="ml-[7px] w-[79px]">GET GENUINE OFFICE</span>
          <span class="w-[489px]">Your license isn't genuine, and you may be a victim of software counterfeiting. Avoid interruption and keep your files safe with genuine Office today.</span>
          <button class="w-[82px] h-[13px] border border-[#c8c8b0] bg-white leading-[10px]">Get genuine Office</button>
          <button class="ml-[6px] w-[59px] h-[13px] border border-[#c8c8b0] bg-white leading-[10px]">Learn more</button>
          <button aria-label="Dismiss" class="ml-auto mr-[6px]">${icon('close', 'w-[6px] h-[6px]')}</button>
        </div>`;
      }
      document.querySelectorAll('[data-header]').forEach((el) => { el.innerHTML = header(el.dataset.header); });

      // ---- ruler ----
      let marks = '';
      for (let n = -2; n <= 18; n++) {
        const x = 193 + n * 42.1;
        if (n !== 0 && n !== 16) marks += `<text x="${x}" y="21" text-anchor="middle">${Math.abs(n)}</text>`;
        if (n < 18) marks += `<path d="M${x + 20.500} 12V19M${x + 11} 15H${x + 13}M${x + 30} 15H${x + 32}" stroke="#777" stroke-width="2"/>`;
      }
      document.querySelectorAll('[data-ruler]').forEach((el) => {
        el.innerHTML = `<div class="flex items-center h-full">
          <span class="ml-[2px] w-[11px] h-[11px] bg-white border border-[#d0d0d0] flex items-center justify-center"><i class="w-1 h-1 border-l-2 border-b-2 border-[#555]"></i></span>
          <svg class="ml-4 w-[295px] h-[14px]" viewBox="87 -6 885 42" font-size="18" fill="#444" aria-hidden="true">
            <path d="M87 2H971V28H87z" fill="#c6c6c6"/><path d="M193 2H865V28H193z" fill="#fff"/>${marks}
            <path d="M187-1H200V4L193.500 11L187 4zM187 24V19L193.500 12L200 19V24zM187 26H200V34H187zM858 26V20L865 13L872 20V26z" fill="#fff" stroke="#888"/>
          </svg></div>`;
      });

      // ---- status bar ----
      document.querySelectorAll('[data-status]').forEach((el) => {
        el.innerHTML = `<div class="h-[14px] bg-[#f1f1f1] border-t border-[#d8d8d8] flex items-center whitespace-nowrap">
          <span class="ml-[7px] w-[52px]">${el.dataset.status}</span><span class="w-[46px]">5977 words</span>
          <span class="w-[20px]">${icon('proof')}</span>${el.dataset.lang ? `<span class="w-[76px]">${el.dataset.lang}</span>` : ''}
          ${icon('access')}<span class="ml-[2px]">Accessibility: Investigate</span>
          <button aria-label="Read mode" class="ml-auto w-[25px] flex justify-center">${icon('book')}</button>
          <button aria-label="Print layout" class="w-6 h-[13px] bg-[#c8c8c8] flex items-center justify-center">${icon('print')}</button>
          <button aria-label="Web layout" class="w-[25px] flex justify-center">${icon('web')}</button>
          <button aria-label="Zoom out" class="ml-[3px] w-[6px]">−</button>
          <span class="relative ml-[3px] w-[61px] h-[10px] flex items-center"><i class="absolute left-0 right-0 h-px bg-[#777]"></i><i class="absolute left-[30px] w-px h-1 bg-[#777]"></i><input type="range" aria-label="Zoom" min="10" max="200" value="64" class="relative w-full h-[10px] appearance-none bg-transparent [&::-webkit-slider-thumb]:appearance-none [&::-webkit-slider-thumb]:w-[3px] [&::-webkit-slider-thumb]:h-[7px] [&::-webkit-slider-thumb]:bg-[#444]" /></span>
          <button aria-label="Zoom in" class="ml-[3px] w-[6px]">+</button>
          <span class="ml-[7px] w-5">60%</span></div>`;
      });

      // ---- requirement list on page 14 ----
      const reqs = [
        ['1.2.1.1', '<u>Thêm sách vào danh mục:</u>', [
          'Quản <u>trị viên cần có khả năng thêm các cuốn sách mới vào danh mục bán hàng.</u>',
          '<u>Điều này</u> bao <u>gồm nhập thông</u> tin <u>về sách như tiêu đề, tác giả, mô tả, hình ảnh và</u>',
          '<u>giá cả.</u> Quản <u>trị viên cần cung cấp một giao diện để sử dụng để nhập thông</u> tin',
          '<u>sách và tải lên hình ảnh tương ứng.</u>']],
        ['1.2.1.2', 'Quản <u>lý danh mục:</u>', [
          'Quản <u>trị viên cần có khả năng quản lý danh mục sách. Điều này có thể</u> bao <u>gồm</u>',
          '<u>tạo ra các danh mục</u> con <u>hoặc nhóm sách thành các danh mục lớn hơn, sắp xếp</u>',
          '<u>lại thứ tự các danh mục, xóa các danh mục không cần thiết và quản lý cấu trúc</u>',
          '<u>tổ chức củathư viện sách.</u> Quản <u>trị viên cần có khả năng thực hiện các thao tác</u>',
          '<u>này để tạo ra cấu trúc danh mục sách hợp lý và dễ dàng tìm kiếm.</u>']],
        ['1.2.1.3', '<u>Tìm kiếm sách:</u>', [
          'Quản <u>trị viên cần có khả năng tìm kiếm sách trong danh mục. Điều này cho phép</u>',
          '<u>quản trị viên tìm kiếm sách dựa trên các tiêu chí như tiêu đề, tác giả, danh mục,</u>',
          'hay <u>từ khóa khác. Tìm kiếm sách có thể hỗ trợ quản trị viên trong việc xem thông</u>',
          'tin chi <u>tiết về sách, chỉnh sửa thông</u> tin <u>hoặc xóa sách khỏi danh mục.</u>']],
        ['1.2.1.4', 'Quản <u>lý số lượng sách:</u>', [
          '<u>Nếu sách trong danh mục có số lượng hạn chế, quản trị viên cần có khả năng</u>',
          '<u>quản lý số lượng sách có sẵn. Điều này</u> bao <u>gồm kiểm tra số lượng sách còn lại,</u>',
          '<u>cập nhật số lượng khi có đơn hàng được đặt, và thông báo khi sách trong danh</u>',
          '<u>mục cạn kiệt.</u>']],
        ['1.2.1.5', '<u>Thêm bài viết:</u>', [
          'Quản <u>trị viên cần có khả năng thêm các bài viết mới về sách vào danh mục. Điều</u>',
          '<u>này</u> bao <u>gồm viết nội</u> dung <u>bài viết, thêm hình ảnh minh họa và đảm bảo rằng</u>',
          '<u>thông</u> tin <u>về sách và liên kết mua sách được cung cấp đầy đủ.</u>']],
        ['1.2.1.6', '<u>Sửa đổi thông</u> tin <u>bài viết:</u>', [
          'Quản <u>trị viên có thể cần chỉnh sửa thông</u> tin <u>trong các bài viết đã có. Điều này</u>',
          'bao <u>gồm cập nhật nội</u> dung, <u>hình ảnh hoặc các</u> chi <u>tiết khác trong bài viết.</u>']],
      ];
      $('requirements').innerHTML = reqs.map(([num, title, lines]) => `<h5 class="mt-1 font-bold flex"><span class="w-[22px]">${num}</span><span>${title}</span></h5>
        <p class="mt-[3px] pl-[18px] whitespace-nowrap">${lines.map((l, i) => `<span class="block ${i < lines.length - 1 ? '[text-align-last:justify]' : ''}">${l}</span>`).join('')}</p>`).join('');

      // ---- diagram helpers ----
      const text = (x, y, s, size, extra = '') => {
        const lines = s.split('|');
        return lines.map((l, i) => `<text x="${x}" y="${y + size * 0.36 + (i - (lines.length - 1) / 2) * size * 1.1}" font-size="${size}" text-anchor="middle" fill="#111" ${extra}>${l}</text>`).join('');
      };
      const oval = ([x, y, s, rx, ry], size) => `<ellipse cx="${x}" cy="${y}" rx="${rx}" ry="${ry}" fill="#fff" stroke="#555" stroke-width="1.500"/>${text(x, y, s, size)}`;
      const line = (pts, extra = '') => `<polyline points="${pts}" fill="none" stroke="#444" stroke-width="1.500" ${extra}/>`;
      const dashed = ([x1, y1, x2, y2, s, lx, ly]) => line([x1, y1, x2, y2], 'stroke-dasharray="9 6" marker-end="url(#head)"')
        + `<rect x="${lx - 15}" y="${ly - 5}" width="30" height="10" fill="#fff"/>` + text(lx, ly, s, 10);
      const actor = (x, y, s) => `<circle cx="${x}" cy="${y - 20}" r="7" fill="#fff" stroke="#444" stroke-width="1.500"/><path d="M${x} ${y - 13}V${y + 8}L${x - 13} ${y + 25}M${x} ${y + 8}L${x + 13} ${y + 25}M${x - 14} ${y - 8}H${x + 14}" stroke="#444" stroke-width="1.500" fill="none"/>${text(x, y + 36, s, 11)}`;

      // use cases of a customer
      $('usecase-customer').innerHTML = '<rect x="576" y="250" width="696" height="525" fill="url(#grid)"/>'
        + [[740, 295], [740, 376], [748, 466], [772, 519], [722, 604], [796, 735]].map((p) => line([623, 519, ...p])).join('')
        + [
          [910, 295, 838, 295, 'include', 875, 295], [1098, 295, 1009, 295, 'include', 1053, 295], [788, 356, 788, 317, 'include', 789, 336],
          [785, 397, 785, 444, 'include', 785, 420], [887, 417, 836, 380, 'extend', 862, 398], [1105, 310, 1058, 356, 'include', 1080, 332],
          [1156, 312, 1203, 356, 'include', 1180, 332], [959, 519, 846, 519, 'include', 903, 519], [1058, 519, 1122, 519, 'include', 1091, 519],
          [759, 583, 794, 539, 'Extend', 777, 559], [952, 593, 828, 537, 'include', 889, 563], [959, 668, 809, 539, 'include', 884, 604],
          [801, 540, 821, 714, 'include', 811, 626],
        ].map(dashed).join('')
        + [
          [788, 295, 'Xem sản phẩm', 49, 21], [959, 295, 'Thêm vào giỏ hàng', 49, 21], [1134, 295, 'Đặt hàng', 37, 21],
          [788, 376, 'Xem chi tiết sản|phẩm', 49, 21], [935, 417, 'Bình luận', 49, 21], [1057, 376, 'Thông tin đơn hàng', 49, 21],
          [1212, 376, 'Thanh toán', 49, 21], [788, 466, 'Tìm kiếm', 41, 21], [808, 519, 'Đăng nhập', 37, 21], [1008, 519, 'Quản lí tài khoản', 49, 21],
          [1170, 519, 'Sửa tài khoản', 49, 21], [759, 604, 'Quên mật khẩu', 37, 21], [1008, 596, 'Đổi mật khẩu', 49, 21],
          [1008, 670, 'Đăng xuất', 49, 21], [832, 735, 'Đăng ký', 37, 21],
        ].map((n) => oval(n, 10)).join('') + actor(621, 519, 'Khách hàng');

      // use cases of an administrator
      $('usecase-admin').innerHTML = line([214, 859, 331, 859]) + [
        [362, 538, 431, 562, 398, 550], [496, 538, 433, 562, 465, 550], [375, 658, 296, 607, 332, 632], [375, 658, 431, 607, 405, 632],
        [375, 720, 375, 828, 376, 775], [613, 632, 611, 692, 612, 663], [534, 668, 605, 692, 572, 681], [701, 668, 616, 692, 655, 681],
        [705, 715, 650, 715, 678, 715], [496, 770, 501, 731, 500, 750], [496, 770, 580, 731, 539, 750], [496, 832, 420, 858, 458, 846],
        [610, 828, 420, 858, 515, 843], [610, 906, 420, 858, 514, 882], [610, 975, 420, 858, 515, 917], [531, 971, 420, 858, 475, 915],
        [375, 963, 375, 890, 376, 926], [375, 1025, 313, 1075, 344, 1050], [375, 1025, 423, 1075, 399, 1050], [531, 1033, 531, 1075, 531, 1054],
        [531, 1033, 613, 1075, 573, 1054], [531, 1033, 701, 1075, 617, 1054], [775, 898, 700, 975, 736, 936], [775, 960, 700, 975, 737, 967],
        [775, 1020, 700, 975, 737, 998], [814, 1042, 775, 1067, 793, 1055], [814, 1042, 855, 1067, 837, 1055],
      ].map(([a, b, c, d, x, y]) => dashed([a, b, c, d, 'Include', x, y])).join('')
        + [
          [362, 515, 'Xóa'], [496, 515, 'Sửa'], [292, 585, 'Thêm Mới'], [431, 585, 'Tất Cả Sản|Phẩm'], [613, 610, 'Thêm'], [534, 646, 'Sửa'],
          [701, 646, 'Xóa'], [501, 707, 'Thêm Mới'], [609, 715, 'Tất Cả Sản|Phẩm'], [744, 715, 'Tìm Kiếm'], [814, 898, 'Thêm Mới'],
          [814, 958, 'Tất Cả Bài Viết'], [814, 1020, 'Chuyên Mục'], [311, 1098, 'Đơn Xác Nhận'], [423, 1098, 'Tất Cả Đơn|Hàng'],
          [530, 1098, 'Sửa'], [613, 1098, 'Thêm'], [701, 1098, 'Xóa'],
        ].map((n) => oval([...n, 40, 22], 11)).join('')
        + [
          [375, 689, 'Danh Mục Sản|Phẩm'], [496, 801, 'Sản Phẩm'], [375, 858, 'Đăng Nhập'], [653, 828, 'Thống Kê'], [653, 906, 'Bình Luận'],
          [653, 975, 'Quản Lý Bài Viết'], [531, 1002, 'Khách Hàng'], [375, 994, 'Đơn Hàng'],
        ].map((n) => oval([...n, 44, 31], 11)).join('')
        + oval([771, 1080, 'Sửa', 31, 13], 11) + oval([857, 1080, 'Xem', 31, 13], 11) + actor(214, 860, 'Quản Trị');

      // function breakdown: [x1, y1, x2, y2, label]
      const cell = ([a, b, c, d, s]) => `<rect x="${a}" y="${b}" width="${c - a}" height="${d - b}" fill="#fff" stroke="#555" stroke-width="1.500"/>${text((a + c) / 2, (b + d) / 2, s, 15)}`;
      const branches = [
        [1111, [[1128, 667, 1238, 718, '1.1 Đăng nhập'], [1128, 743, 1238, 794, '1.2 Đăng xuất'], [1129, 817, 1253, 869, '1.3 Đăng ký tài|khoản'], [1128, 893, 1238, 944, '1.4 Xem thông|tin cá nhân']]],
        [1268, [[1287, 667, 1405, 718, '2.1 Đăng nhập'], [1287, 743, 1460, 810, '2.2 Quản lý danh sách|sách|(Thêm, sửa, xóa)'], [1287, 844, 1465, 920, '2.3 Quản lý danh sách|người dùng'], [1287, 952, 1469, 1028, '2.4 Quản lý đơn đặt hàng|(xem danh sách, chi tiết|đơn đặt hàng)'], [1287, 1061, 1452, 1112, '2.5 Thống kê|(sản phẩm, đơn hàng)']]],
        [1484, [[1501, 658, 1611, 710, '3.1 Tìm kiếm|sách'], [1501, 733, 1604, 785, '3.2 Xem danh|sách sách'], [1501, 808, 1628, 860, '3.3 Xem chi tiết|sách'], [1501, 884, 1611, 936, '3.4 Đặt hàng|sách'], [1501, 960, 1611, 1012, '3.5 Xem giỏ|hàng'], [1501, 1035, 1611, 1088, '3.6 Thanh toán|đơn hàng'], [1501, 1111, 1611, 1163, '3.7 Xem lịch sử|đơn hàng']]],
        [1640, [[1656, 658, 1766, 710, '4.1 Quản lí cơ|sở dữ liệu sách'], [1656, 733, 1766, 785, '4.2 Xử lí đơn|đặt hàng'], [1656, 803, 1792, 869, '4.3 Gửi thông báo|mail cho người|dùng']]],
      ];
      $('functions').innerHTML = line([1447, 508, 1447, 541]) + line([1166, 574, 1166, 541, 1694, 541, 1694, 574]) + line([1316, 541, 1316, 574]) + line([1531, 541, 1531, 574])
        + branches.map(([x, items]) => items.map((c) => line([x, 641, x, (c[1] + c[3]) / 2, c[0], (c[1] + c[3]) / 2]) + cell(c)).join('')).join('')
        + [[1379, 441, 1514, 508, 'Website bán sách'], [1099, 574, 1217, 641, '1.0 Người dùng'], [1249, 574, 1385, 641, '2.0 Quản trị viên'], [1471, 574, 1589, 641, '3.0 Khách hàng'], [1627, 574, 1763, 641, '4.0 Hệ thống']].map(cell).join('');

      // entity relations
      const entity = ([x, y, w, h, name, fields]) => {
        const cx = x + w / 2 + 10;
        return `<rect x="${x}" y="${y}" width="${w}" height="${h}" rx="2" fill="#f1f1f1" stroke="#777"/><path d="M${x} ${y + 24}H${x + w}M${x} ${y + h - 6}H${x + w}" stroke="#777"/>
          <circle cx="${cx - name.length * 3 - 12}" cy="${y + 13}" r="8" fill="#adc9b4" stroke="#333"/>${text(cx - name.length * 3 - 12, y + 13, 'E', 11, 'font-weight="700"')}${text(cx, y + 13, name, 10)}`
          + fields.map((f, i) => `<circle cx="${x + 9}" cy="${y + 33 + i * 12.4}" r="2" fill="#fff" stroke="#3a9a6a"/><text x="${x + 15}" y="${y + 37 + i * 12.4}" font-size="10" fill="#222">${f}</text>`).join('');
      };
      const rel = (d) => `<path d="${d}" fill="none" stroke="#555" stroke-width="1.300" marker-end="url(#crow)"/>`;
      $('erd').innerHTML = ['M667 227V286', 'M799 227V309', 'M363 381Q340 415 297 451', 'M388 381Q378 420 376 463', 'M421 381Q435 430 472 457', 'M459 377Q540 430 613 459',
        'M615 394Q600 420 560 457', 'M667 394V457', 'M709 394C760 470 755 525 715 570S620 638 572 642', 'M301 540Q370 595 450 624'].map(rel).join('')
        + [[675, 256, 'has'], [829, 256, 'classified_as'], [343, 423, 'places'], [389, 423, 'has'], [460, 423, 'owns'], [564, 423, 'writes'], [621, 423, 'included_in'],
          [687, 423, 'receives'], [774, 500, 'appears_in'], [393, 577, 'includes']].map(([x, y, s]) => text(x, y, s, 9)).join('')
        + [
          [613, 142, 106, 85, 'categories', ['category_id : int', 'name : string', 'image : string', 'status : tinyint']],
          [745, 142, 106, 85, 'posts', ['post_id : int', 'category_id : int', 'title : string', 'author : string']],
          [613, 286, 106, 108, 'products', ['product_id : int', 'category_id : int', 'name : string', 'image : string', 'quantity : int', 'price : int']],
          [745, 309, 107, 61, 'post_categories', ['id : int', 'name : string']],
          [348, 297, 111, 84, 'users', ['id : int', 'name : string', 'email : string', 'password : string']],
          [199, 451, 102, 96, 'orders', ['order_id : int', 'user_id : int', 'date : datetime', 'total : int', 'status : tinyint']],
          [326, 463, 102, 72, 'address', ['id : int', 'user_id : int', 'address : string']],
          [453, 457, 133, 84, 'carts', ['cart_id : int', 'product_id : int', 'user_id : int', 'product_quantity : int']],
          [613, 457, 107, 84, 'comments', ['comment_id : int', 'user_id : int', 'product_id : int', 'content : text']],
          [450, 606, 122, 97, 'orderdetails', ['orderdetails_id : int', 'order_id : int', 'product_id : int', 'quantity : int', 'price : int']],
        ].map(entity).join('');

      // activity diagrams
      const step = ([x, y, w, s]) => `<rect x="${x - w / 2}" y="${y - 19}" width="${w}" height="38" rx="13" fill="#f1f1f1" stroke="#999" stroke-width="1.500"/>${text(x, y, s, 13)}`;
      const ask = ([x, y, w, s]) => `<path d="M${x - w / 2} ${y}l12-13H${x + w / 2 - 12}l12 13l-12 13H${x - w / 2 + 12}z" fill="#f1f1f1" stroke="#999" stroke-width="1.500"/>${text(x, y, s, 12)}`;
      const join = ([x, y]) => `<path d="M${x} ${y - 13}l13 13l-13 13l-13-13z" fill="#f1f1f1" stroke="#999" stroke-width="1.500"/>`;
      const begin = (x, y) => `<circle cx="${x}" cy="${y}" r="12" fill="#222"/>`;
      const finish = (x, y) => `<circle cx="${x}" cy="${y}" r="13" fill="#fff" stroke="#222" stroke-width="1.500"/><circle cx="${x}" cy="${y}" r="8" fill="#222"/>`;
      const go = (pts) => line(pts, 'marker-end="url(#flow)"');

      $('flow-user').innerHTML = begin(1468, 97) + finish(1468, 695)
        + [[1468, 109, 1468, 131], [1468, 169, 1468, 191], [1468, 229, 1468, 251], [1468, 289, 1468, 311], [1410, 324, 1357, 324, 1357, 349], [1526, 324, 1579, 324, 1579, 349],
          [1357, 387, 1357, 409], [1357, 447, 1357, 470], [1357, 508, 1357, 530], [1357, 568, 1357, 590], [1357, 628, 1357, 647, 1455, 647], [1579, 387, 1579, 647, 1481, 647], [1468, 660, 1468, 682]].map(go).join('')
        + [[1468, 150, 128, 'User đăng nhập'], [1468, 210, 160, 'User chọn sản phẩm'], [1468, 270, 222, 'Thêm sản phẩm vào giỏ hàng'], [1357, 368, 144, 'Đi đến thanh toán'],
          [1357, 428, 259, 'Nhập địa chỉ, số điện thoại, ghi chú'], [1357, 489, 116, 'Tạo đơn hàng'], [1357, 549, 166, 'Tạo chi tiết đơn hàng'], [1357, 609, 154, 'Gửi email xác nhận'],
          [1579, 368, 144, 'Tiếp tục mua sắm']].map(step).join('')
        + ask([1468, 324, 116, 'Đã chọn xong?']) + join([1468, 647]) + text(1398, 317, 'Yes', 11) + text(1535, 318, 'No', 11);

      $('flow-admin').innerHTML = `<path d="M604 341H1220V832H604zM604 364H688L700 352V341" fill="none" stroke="#222" stroke-width="2.500"/>` + text(650, 352, 'Hành động', 15)
        + begin(875, 139) + finish(875, 928)
        + [[875, 151, 875, 173], [875, 210, 875, 232], [875, 270, 875, 292], [875, 331, 875, 382], [797, 395, 724, 395, 724, 420], [953, 395, 1027, 395, 1027, 420],
          [724, 458, 724, 496], [724, 535, 724, 805, 861, 805], [949, 434, 937, 434, 937, 458], [1104, 434, 1117, 434, 1117, 458], [937, 496, 937, 535], [937, 573, 937, 612],
          [937, 650, 937, 772, 1013, 772], [1117, 485, 1117, 512], [1117, 550, 1117, 589], [1117, 627, 1117, 666], [1117, 704, 1117, 726], [1177, 471, 1202, 471, 1202, 606],
          [1202, 600, 1202, 739, 1131, 739], [1117, 752, 1117, 772, 1041, 772], [1027, 785, 1027, 805, 889, 805], [875, 818, 875, 855], [875, 893, 875, 915]].map(go).join('')
        + [[875, 191, 141, 'Admin đăng nhập'], [875, 251, 206, 'Vào mục quản lý sản phẩm'], [875, 311, 133, 'Chọn hành động'], [723, 439, 195, 'Nhập thông tin sản phẩm'],
          [723, 516, 213, 'Lưu sản phẩm vào database'], [936, 477, 127, 'Chọn sản phẩm'], [936, 554, 148, 'Cập nhật thông tin'], [936, 631, 106, 'Lưu thay đổi'],
          [1117, 531, 127, 'Chọn sản phẩm'], [1117, 608, 114, 'Xác nhận xoá'], [1117, 685, 149, 'Xoá khỏi database'], [875, 874, 223, 'Quay về danh sách sản phẩm']].map(step).join('')
        + [[875, 395, 156, 'Thêm sản phẩm mới?'], [1027, 434, 155, 'Chỉnh sửa sản phẩm?'], [1117, 471, 120, 'Xoá sản phẩm?']].map(ask).join('')
        + [[1117, 739], [1027, 772], [875, 805]].map(join).join('') + text(786, 390, 'Yes', 11) + text(937, 427, 'Yes', 11) + text(1132, 492, 'Yes', 11);
    </script>
  </body>

</html>
